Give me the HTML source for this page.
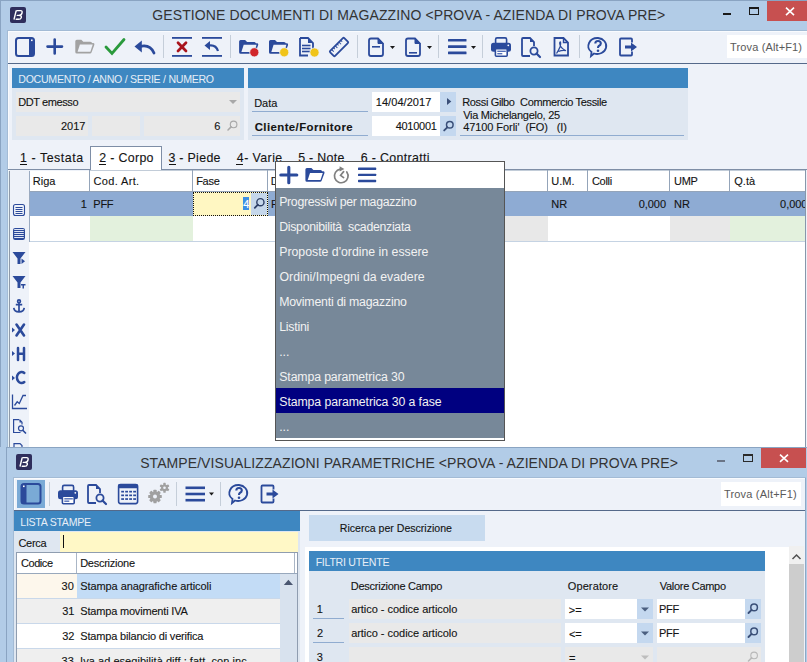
<!DOCTYPE html>
<html><head><meta charset="utf-8"><style>
html,body{margin:0;padding:0;}
body{width:807px;height:662px;position:relative;overflow:hidden;font-family:"Liberation Sans", sans-serif;background:#b2cce7;}
svg{pointer-events:none;}
div{-webkit-text-stroke:0.12px currentColor;}
</style></head><body>
<div style="position:absolute;left:0px;top:0px;width:807px;height:447px;background:#b2cce7;"></div>
<div style="position:absolute;left:0px;top:0px;width:807px;height:1px;background:#8aa4c2;"></div>
<div style="position:absolute;left:0px;top:0px;width:1px;height:447px;background:#8aa4c2;"></div>
<div style="position:absolute;left:10px;top:7px;width:16px;height:16px;background:#2f2e5c;border-radius:2px"></div>
<svg style="position:absolute;left:0;top:0" width="807" height="662" viewBox="0 0 807 662"><g stroke="#fff" stroke-width="1.4" fill="none" stroke-linecap="round" stroke-linejoin="round"><path d="M14.1 19 L16.1 11"/><path d="M16.9 10.6 H20.6 Q22.5 10.6 22.1 12.6 Q21.7 15.2 19 15.4 H17.3 M19 15.4 Q21.8 15.6 21.3 17.6 Q20.8 19.3 18.5 19.3 H16.2"/></g></svg>
<div style="position:absolute;left:152.27px;top:8.45px;font-size:14px;line-height:14px;color:#333333;font-weight:400;letter-spacing:0.102px;white-space:pre;-webkit-text-stroke:0;">GESTIONE DOCUMENTI DI MAGAZZINO &lt;PROVA - AZIENDA DI PROVA PRE&gt;</div>
<div style="position:absolute;left:723px;top:13px;width:8px;height:2px;background:#1a1a1a;"></div>
<div style="position:absolute;left:749px;top:7px;width:10px;height:8px;background:transparent;border:1px solid #1a1a1a;border-top-width:2px;box-sizing:border-box"></div>
<div style="position:absolute;left:767px;top:1px;width:40px;height:20px;background:#c75050;"></div>
<svg style="position:absolute;left:0;top:0" width="807" height="662" viewBox="0 0 807 662"><path d="M786 7.6 L794 15.2 M794 7.6 L786 15.2" stroke="#fff" stroke-width="1.6"/></svg>
<div style="position:absolute;left:7px;top:30px;width:800px;height:417px;background:#a3bbd5;"></div>
<div style="position:absolute;left:8px;top:31px;width:799px;height:416px;background:#f9fbfe;"></div>
<div style="position:absolute;left:9px;top:32px;width:798px;height:415px;background:#eef2f9;"></div>
<div style="position:absolute;left:8px;top:63px;width:799px;height:1px;background:#54698a;"></div>
<div style="position:absolute;left:727px;top:35px;width:80px;height:23px;background:#ffffff;"></div>
<div style="position:absolute;left:730.11px;top:42.09px;font-size:11px;line-height:11px;color:#5a5a5a;font-weight:400;letter-spacing:0.131px;white-space:pre;-webkit-text-stroke:0;">Trova (Alt+F1)</div>
<div style="position:absolute;left:12px;top:68px;width:232px;height:20px;background:#3e87c1;"></div>
<div style="position:absolute;left:12px;top:88px;width:232px;height:52px;background:#dfe7f1;"></div>
<div style="position:absolute;left:18.27px;top:74.03px;font-size:10.6px;line-height:10.6px;color:#e6eef7;font-weight:400;letter-spacing:-0.275px;white-space:pre;-webkit-text-stroke:0;">DOCUMENTO / ANNO / SERIE / NUMERO</div>
<div style="position:absolute;left:16px;top:92px;width:224px;height:20px;background:#e9e9e9;"></div>
<div style="position:absolute;left:18.27px;top:96.99px;font-size:11px;line-height:11px;color:#141414;font-weight:400;letter-spacing:-0.409px;white-space:pre;">DDT emesso</div>
<div style="position:absolute;left:16px;top:116px;width:72px;height:20px;background:#e9e9e9;"></div>
<div style="position:absolute;left:92px;top:116px;width:48px;height:20px;background:#e9e9e9;"></div>
<div style="position:absolute;left:144px;top:116px;width:96px;height:20px;background:#e9e9e9;"></div>
<div style="position:absolute;right:721.59px;top:121.19px;font-size:11px;line-height:11px;color:#141414;font-weight:400;letter-spacing:0.000px;white-space:pre;">2017</div>
<div style="position:absolute;right:586.60px;top:121.19px;font-size:11px;line-height:11px;color:#141414;font-weight:400;letter-spacing:0.000px;white-space:pre;">6</div>
<div style="position:absolute;left:248px;top:68px;width:440px;height:20px;background:#3e87c1;"></div>
<div style="position:absolute;left:248px;top:88px;width:440px;height:52px;background:#dfe7f1;"></div>
<div style="position:absolute;left:252px;top:111px;width:116px;height:1px;background:#90acd0;"></div>
<div style="position:absolute;left:252px;top:135px;width:116px;height:1px;background:#90acd0;"></div>
<div style="position:absolute;left:254.17px;top:98.19px;font-size:11px;line-height:11px;color:#141414;font-weight:400;letter-spacing:0.000px;white-space:pre;">Data</div>
<div style="position:absolute;left:254.67px;top:122.35px;font-size:11.4px;line-height:11.4px;color:#141414;font-weight:700;letter-spacing:0.425px;white-space:pre;">Cliente/Fornitore</div>
<div style="position:absolute;left:372px;top:92px;width:68px;height:20px;background:#ffffff;"></div>
<div style="position:absolute;left:440px;top:92px;width:16px;height:20px;background:#c4d8ef;"></div>
<div style="position:absolute;left:372px;top:116px;width:68px;height:20px;background:#ffffff;"></div>
<div style="position:absolute;left:440px;top:116px;width:16px;height:20px;background:#c4d8ef;"></div>
<div style="position:absolute;left:375.75px;top:96.99px;font-size:11px;line-height:11px;color:#141414;font-weight:400;letter-spacing:0.060px;white-space:pre;">14/04/2017</div>
<div style="position:absolute;right:370.35px;top:120.99px;font-size:11px;line-height:11px;color:#141414;font-weight:400;letter-spacing:-0.258px;white-space:pre;">4010001</div>
<div style="position:absolute;left:462.27px;top:96.79px;font-size:11px;line-height:11px;color:#141414;font-weight:400;letter-spacing:-0.352px;white-space:pre;">Rossi Gilbo  Commercio Tessile</div>
<div style="position:absolute;left:463.14px;top:109.59px;font-size:11px;line-height:11px;color:#141414;font-weight:400;letter-spacing:-0.257px;white-space:pre;">Via Michelangelo, 25</div>
<div style="position:absolute;left:463.13px;top:122.19px;font-size:11px;line-height:11px;color:#141414;font-weight:400;letter-spacing:-0.069px;white-space:pre;">47100 Forli'  (FO)   (I)</div>
<div style="position:absolute;left:460px;top:135px;width:224px;height:1px;background:#90acd0;"></div>
<div style="position:absolute;left:8px;top:169px;width:82px;height:1px;background:#7e8ea6;"></div>
<div style="position:absolute;left:162px;top:169px;width:645px;height:1px;background:#7e8ea6;"></div>
<div style="position:absolute;left:90px;top:170px;width:715px;height:1px;background:#c2ccd8;"></div>
<div style="position:absolute;left:90px;top:146px;width:72px;height:24px;background:#ffffff;border:1px solid #7e8ea6;border-bottom:none;box-sizing:border-box"></div>
<div style="position:absolute;left:20.05px;top:152.30px;font-size:12.4px;line-height:12.4px;color:#141414;font-weight:400;letter-spacing:0.545px;white-space:pre;">1 - Testata</div>
<div style="position:absolute;left:99.24px;top:152.30px;font-size:12.4px;line-height:12.4px;color:#141414;font-weight:400;letter-spacing:0.326px;white-space:pre;">2 - Corpo</div>
<div style="position:absolute;left:168.38px;top:152.30px;font-size:12.4px;line-height:12.4px;color:#141414;font-weight:400;letter-spacing:0.313px;white-space:pre;">3 - Piede</div>
<div style="position:absolute;left:236.83px;top:152.30px;font-size:12.4px;line-height:12.4px;color:#141414;font-weight:400;letter-spacing:0.413px;white-space:pre;">4- Varie</div>
<div style="position:absolute;left:298.16px;top:152.30px;font-size:12.4px;line-height:12.4px;color:#141414;font-weight:400;letter-spacing:0.301px;white-space:pre;">5 - Note</div>
<div style="position:absolute;left:360.64px;top:152.30px;font-size:12.4px;line-height:12.4px;color:#141414;font-weight:400;letter-spacing:0.352px;white-space:pre;">6 - Contratti</div>
<div style="position:absolute;left:20.3px;top:164px;width:7px;height:1px;background:#141414;"></div>
<div style="position:absolute;left:99.3px;top:164px;width:7px;height:1px;background:#141414;"></div>
<div style="position:absolute;left:168.5px;top:164px;width:7px;height:1px;background:#141414;"></div>
<div style="position:absolute;left:236.2px;top:164px;width:7px;height:1px;background:#141414;"></div>
<div style="position:absolute;left:8px;top:171px;width:1px;height:276px;background:#e6f2f8;"></div>
<div style="position:absolute;left:9px;top:171px;width:1px;height:276px;background:#8f9aa8;"></div>
<div style="position:absolute;left:10px;top:171px;width:19px;height:276px;background:#eef2f9;"></div>
<div style="position:absolute;left:29px;top:171px;width:776px;height:276px;background:#ffffff;"></div>
<div style="position:absolute;left:805px;top:170px;width:1px;height:277px;background:#8797ab;"></div>
<div style="position:absolute;left:29px;top:191px;width:776px;height:1px;background:#94a4b9;"></div>
<div style="position:absolute;left:89px;top:170px;width:1px;height:21px;background:#94a4b9;"></div>
<div style="position:absolute;left:192px;top:170px;width:1px;height:21px;background:#94a4b9;"></div>
<div style="position:absolute;left:267px;top:170px;width:1px;height:21px;background:#94a4b9;"></div>
<div style="position:absolute;left:547px;top:170px;width:1px;height:21px;background:#94a4b9;"></div>
<div style="position:absolute;left:587px;top:170px;width:1px;height:21px;background:#94a4b9;"></div>
<div style="position:absolute;left:669px;top:170px;width:1px;height:21px;background:#94a4b9;"></div>
<div style="position:absolute;left:729px;top:170px;width:1px;height:21px;background:#94a4b9;"></div>
<div style="position:absolute;left:32.77px;top:175.59px;font-size:11px;line-height:11px;color:#141414;font-weight:400;letter-spacing:-0.012px;white-space:pre;">Riga</div>
<div style="position:absolute;left:93.57px;top:175.59px;font-size:11px;line-height:11px;color:#141414;font-weight:400;letter-spacing:0.345px;white-space:pre;">Cod. Art.</div>
<div style="position:absolute;left:196.17px;top:175.59px;font-size:11px;line-height:11px;color:#141414;font-weight:400;letter-spacing:-0.257px;white-space:pre;">Fase</div>
<div style="position:absolute;left:270.77px;top:175.59px;font-size:11px;line-height:11px;color:#141414;font-weight:400;letter-spacing:0.000px;white-space:pre;">D</div>
<div style="position:absolute;left:551.30px;top:175.59px;font-size:11px;line-height:11px;color:#141414;font-weight:400;letter-spacing:0.000px;white-space:pre;">U.M.</div>
<div style="position:absolute;left:591.97px;top:175.59px;font-size:11px;line-height:11px;color:#141414;font-weight:400;letter-spacing:-0.300px;white-space:pre;">Colli</div>
<div style="position:absolute;left:674.00px;top:175.59px;font-size:11px;line-height:11px;color:#141414;font-weight:400;letter-spacing:-0.300px;white-space:pre;">UMP</div>
<div style="position:absolute;left:734.32px;top:175.59px;font-size:11px;line-height:11px;color:#141414;font-weight:400;letter-spacing:0.000px;white-space:pre;">Q.tà</div>
<div style="position:absolute;left:29px;top:192px;width:776px;height:24px;background:#8eabd3;"></div>
<div style="position:absolute;right:720.15px;top:198.89px;font-size:11px;line-height:11px;color:#141414;font-weight:400;letter-spacing:0.000px;white-space:pre;">1</div>
<div style="position:absolute;left:93.37px;top:198.89px;font-size:11px;line-height:11px;color:#141414;font-weight:400;letter-spacing:-0.300px;white-space:pre;">PFF</div>
<div style="position:absolute;left:271.07px;top:198.89px;font-size:11px;line-height:11px;color:#141414;font-weight:400;letter-spacing:0.000px;white-space:pre;">P</div>
<div style="position:absolute;left:551.27px;top:198.89px;font-size:11px;line-height:11px;color:#141414;font-weight:400;letter-spacing:0.000px;white-space:pre;">NR</div>
<div style="position:absolute;right:140.97px;top:198.89px;font-size:11px;line-height:11px;color:#141414;font-weight:400;letter-spacing:-0.034px;white-space:pre;">0,000</div>
<div style="position:absolute;left:673.97px;top:198.89px;font-size:11px;line-height:11px;color:#141414;font-weight:400;letter-spacing:0.000px;white-space:pre;">NR</div>
<div style="position:absolute;right:-0.43px;top:198.89px;font-size:11px;line-height:11px;color:#141414;font-weight:400;letter-spacing:-0.034px;white-space:pre;">0,000</div>
<div style="position:absolute;left:805px;top:170px;width:1px;height:47px;background:#8797ab;"></div>
<div style="position:absolute;left:806px;top:170px;width:1px;height:47px;background:#eef2f9;"></div>
<div style="position:absolute;left:193px;top:192px;width:75px;height:24px;background:#fff7c2;"></div>
<div style="position:absolute;left:251px;top:193px;width:16px;height:22px;background:#c5d7eb;"></div>
<div style="position:absolute;left:243px;top:197px;width:6px;height:13px;background:#3c8fe4;"></div>
<div style="position:absolute;right:557.65px;top:199.19px;font-size:11px;line-height:11px;color:#ffffff;font-weight:400;letter-spacing:0.000px;white-space:pre;">4</div>
<div style="position:absolute;left:193px;top:192px;width:75px;height:24px;box-sizing:border-box;border:1px dotted #111"></div>
<div style="position:absolute;left:90px;top:216px;width:103px;height:25px;background:#e3f1dd;"></div>
<div style="position:absolute;left:504px;top:216px;width:44px;height:25px;background:#e8e8e8;"></div>
<div style="position:absolute;left:670px;top:216px;width:60px;height:25px;background:#e8e8e8;"></div>
<div style="position:absolute;left:730px;top:216px;width:75px;height:25px;background:#e3f1dd;"></div>
<div style="position:absolute;left:29px;top:241px;width:776px;height:1px;background:#c5d3e3;"></div>
<div style="position:absolute;left:29px;top:171px;width:1px;height:71px;background:#9aaac0;"></div>
<svg style="position:absolute;left:0;top:0" width="807" height="662" viewBox="0 0 807 662"><rect x="13.5" y="204.5" width="11" height="11" rx="2" fill="none" stroke="#2b4a9b" stroke-width="1.1"/><rect x="15.5" y="207" width="7" height="1" fill="#2b4a9b"/><rect x="15.5" y="209" width="7" height="1" fill="#2b4a9b"/><rect x="15.5" y="211" width="7" height="1" fill="#2b4a9b"/><rect x="15.5" y="213" width="7" height="1" fill="#2b4a9b"/><rect x="13" y="228" width="12" height="12" rx="2.2" fill="#2b4a9b"/><rect x="15" y="229" width="8" height="1" fill="#dfe6f5"/><rect x="14" y="229" width="0.8" height="1" fill="#dfe6f5"/><rect x="23.2" y="229" width="0.8" height="1" fill="#dfe6f5"/><rect x="15" y="231" width="8" height="1" fill="#dfe6f5"/><rect x="14" y="231" width="0.8" height="1" fill="#dfe6f5"/><rect x="23.2" y="231" width="0.8" height="1" fill="#dfe6f5"/><rect x="15" y="233" width="8" height="1" fill="#dfe6f5"/><rect x="14" y="233" width="0.8" height="1" fill="#dfe6f5"/><rect x="23.2" y="233" width="0.8" height="1" fill="#dfe6f5"/><rect x="15" y="235" width="8" height="1" fill="#dfe6f5"/><rect x="14" y="235" width="0.8" height="1" fill="#dfe6f5"/><rect x="23.2" y="235" width="0.8" height="1" fill="#dfe6f5"/><rect x="15" y="237" width="8" height="1" fill="#dfe6f5"/><rect x="14" y="237" width="0.8" height="1" fill="#dfe6f5"/><rect x="23.2" y="237" width="0.8" height="1" fill="#dfe6f5"/><path d="M12.5 252 L25.5 252 L20.5 258.5 L20.5 264 L17.5 264 L17.5 258.5 Z" fill="#2b4a9b"/><path d="M21.5 258.5 L25 261.2 L21.5 264 Z" fill="#2b4a9b"/><path d="M12.5 276 L25.5 276 L20.5 282.5 L20.5 288 L17.5 288 L17.5 282.5 Z" fill="#2b4a9b"/><path d="M21 284 H25.5 V285.5 H24 V288.5 H22.5 V285.5 H21 Z" fill="#2b4a9b"/><g stroke="#2b4a9b" stroke-width="1.7" fill="none"><circle cx="19" cy="301.3" r="1.4"/><path d="M19 302.8 V311.5 M15.8 304.6 H22.2 M13.8 307.8 Q14.2 311.8 19 311.8 Q23.8 311.8 24.2 307.8"/></g><path d="M12 327.5 L15 330 L12 332.5 Z" fill="#2b4a9b"/><path d="M16.5 324.5 L24 335.5 M24 324.5 L16.5 335.5" stroke="#2b4a9b" stroke-width="2.6" stroke-linecap="round"/><path d="M12 351.0 L15 353.5 L12 356.0 Z" fill="#2b4a9b"/><path d="M18 348 V360 M24 348 V360 M18 353.8 H24" stroke="#2b4a9b" stroke-width="2.5" stroke-linecap="round"/><path d="M12 375.5 L15 378 L12 380.5 Z" fill="#2b4a9b"/><path d="M24.3 373 A4.6 5.5 0 1 0 24.3 382" stroke="#2b4a9b" stroke-width="2.5" fill="none" stroke-linecap="round"/><path d="M12.5 394.5 V408.5 H27" stroke="#2b4a9b" stroke-width="1.3" fill="none"/><path d="M14.5 405.5 L17.2 401.8 L19.3 403.5 L23 395.5 L26 395.5" stroke="#2b4a9b" stroke-width="1.3" fill="none"/><path d="M19 419.6 H13.6 V432.5 H20.5 M19.5 419.6 L22 422.2 V424.5" stroke="#2b4a9b" stroke-width="1.2" fill="none"/><path d="M19.5 419.6 V422.5 H22 Z" fill="#2b4a9b"/><circle cx="21" cy="428.3" r="2.5" stroke="#2b4a9b" stroke-width="1.2" fill="none"/><path d="M23 430.5 L25.5 433" stroke="#2b4a9b" stroke-width="1.7" stroke-linecap="round"/><path d="M14 447 V443.6 H20 L22 445.6 V447" stroke="#2b4a9b" stroke-width="1.2" fill="none"/></svg>
<svg style="position:absolute;left:0;top:0" width="807" height="662" viewBox="0 0 807 662"><rect x="16" y="38" width="18" height="18" rx="2.5" fill="none" stroke="#2b4a9b" stroke-width="2"/><rect x="29" y="38" width="5" height="18" fill="#2b4a9b"/><rect x="31" y="39.5" width="1.6" height="1.6" fill="#fff"/><path d="M54.7 39.5 V53.5 M47.5 46.6 H62" stroke="#2b4a9b" stroke-width="2.6" stroke-linecap="round"/><path d="M106 47 L112 53.5 L124 39.5" stroke="#2a9a3c" stroke-width="2.8" fill="none" stroke-linecap="round"/><path d="M140 46.5 Q150 44 154 53" stroke="#2b4a9b" stroke-width="2.8" fill="none" stroke-linecap="round"/><path d="M134.5 46.5 L141.8 40.5 L141.8 52.5 Z" fill="#2b4a9b"/><rect x="163.0" y="35" width="1" height="23" fill="#c5ced9"/><rect x="230.0" y="35" width="1" height="23" fill="#c5ced9"/><rect x="357.0" y="35" width="1" height="23" fill="#c5ced9"/><rect x="438.0" y="35" width="1" height="23" fill="#c5ced9"/><rect x="482.0" y="35" width="1" height="23" fill="#c5ced9"/><rect x="579.0" y="35" width="1" height="23" fill="#c5ced9"/><rect x="172" y="37" width="20" height="1.8" fill="#2b4a9b"/><rect x="172" y="55" width="20" height="1.8" fill="#2b4a9b"/><path d="M178 42.8 L186 51 M186 42.8 L178 51" stroke="#a8141c" stroke-width="2.7" stroke-linecap="round"/><rect x="202" y="37" width="20" height="1.8" fill="#2b4a9b"/><rect x="202" y="55" width="20" height="1.8" fill="#2b4a9b"/><path d="M209 45.5 Q216 44.5 218 51" stroke="#2b4a9b" stroke-width="2.2" fill="none"/><path d="M204.5 45.5 L210 41 L210 50 Z" fill="#2b4a9b"/><path d="M75.3 41.3 Q75.3 39.8 76.8 39.8 H81.3 L83.3 41.8 H90.3 Q91.8 41.8 92.3 43.3 L92.6 43.0 H93.3 Q94.69999999999999 43.0 94.4 44.8 L91.6 52.3 Q91.2 53.5 90.0 53.5 H76.8 Q75.3 53.5 75.3 52.0 Z" fill="#a2a2a2"/><path d="M79.89999999999999 44.599999999999994 H92.69999999999999 L90.39999999999999 51.8 H77.6 Z" fill="#eef2f9"/><path d="M239.1 41.5 Q239.1 40 240.6 40 H245.1 L247.1 42 H254.1 Q255.6 42 256.1 43.5 L256.4 43.2 H257.1 Q258.5 43.2 258.2 45 L255.4 52.5 Q255.0 53.7 253.79999999999998 53.7 H240.6 Q239.1 53.7 239.1 52.2 Z" fill="#2b4a9b"/><path d="M243.7 44.8 H256.5 L254.2 52 H241.4 Z" fill="#eef2f9"/><circle cx="254.29999999999998" cy="52.3" r="4.6" fill="#d1262a" stroke="#eef2f9" stroke-width="0.8"/><path d="M269 41.5 Q269 40 270.5 40 H275 L277 42 H284 Q285.5 42 286 43.5 L286.3 43.2 H287 Q288.4 43.2 288.1 45 L285.3 52.5 Q284.9 53.7 283.7 53.7 H270.5 Q269 53.7 269 52.2 Z" fill="#2b4a9b"/><path d="M273.6 44.8 H286.4 L284.1 52 H271.3 Z" fill="#eef2f9"/><circle cx="284.2" cy="52.3" r="4.6" fill="#f0c41a" stroke="#eef2f9" stroke-width="0.8"/><path d="M300 38 H308 L313 43 V50 M300 38 V55.5 H308" stroke="#2b4a9b" stroke-width="1.8" fill="none"/><path d="M308 38 V43 H313 Z" fill="#2b4a9b"/><rect x="302" y="44.7" width="8.5" height="1.6" fill="#2b4a9b"/><rect x="302" y="47.7" width="8.5" height="1.6" fill="#2b4a9b"/><rect x="302" y="50.7" width="8.5" height="1.6" fill="#2b4a9b"/><circle cx="314.5" cy="52.5" r="4.6" fill="#f0c41a" stroke="#eef2f9" stroke-width="0.8"/><g transform="rotate(-45 339 47)"><rect x="329" y="43.5" width="20" height="7" rx="1" fill="none" stroke="#2b4a9b" stroke-width="1.8"/><rect x="331.5" y="43.5" width="1" height="3" fill="#2b4a9b"/><rect x="334.1" y="43.5" width="1" height="2" fill="#2b4a9b"/><rect x="336.7" y="43.5" width="1" height="3" fill="#2b4a9b"/><rect x="339.3" y="43.5" width="1" height="2" fill="#2b4a9b"/><rect x="341.9" y="43.5" width="1" height="3" fill="#2b4a9b"/><rect x="344.5" y="43.5" width="1" height="2" fill="#2b4a9b"/></g><path d="M371 38.5 H378 L383 43.5 V54.0 Q383 56.0 381 56.0 H371 Q369 56.0 369 54.0 V40.5 Q369 38.5 371 38.5 Z" stroke="#2b4a9b" stroke-width="1.8" fill="none"/><path d="M378 38.5 V43.5 H383 Z" fill="#2b4a9b" stroke="#2b4a9b" stroke-width="1"/><rect x="372" y="46.0" width="8" height="1.6" fill="#2b4a9b"/><path d="M390 46 H395 L392.5 49 Z" fill="#1a1a1a"/><path d="M408 38.5 H415 L420 43.5 V54.0 Q420 56.0 418 56.0 H408 Q406 56.0 406 54.0 V40.5 Q406 38.5 408 38.5 Z" stroke="#2b4a9b" stroke-width="1.8" fill="none"/><path d="M415 38.5 V43.5 H420 Z" fill="#2b4a9b" stroke="#2b4a9b" stroke-width="1"/><rect x="409" y="52.0" width="8" height="1.6" fill="#2b4a9b"/><path d="M427 46 H432 L429.5 49 Z" fill="#1a1a1a"/><rect x="448" y="39.0" width="18.5" height="2.6" rx="0.5" fill="#2b4a9b"/><rect x="448" y="45.3" width="18.5" height="2.6" rx="0.5" fill="#2b4a9b"/><rect x="448" y="51.6" width="18.5" height="2.6" rx="0.5" fill="#2b4a9b"/><path d="M471 46 H476 L473.5 49 Z" fill="#1a1a1a"/><rect x="495.6" y="37.9" width="11" height="6" rx="1.5" fill="none" stroke="#2b4a9b" stroke-width="1.6"/><rect x="491" y="42.8" width="20" height="9" rx="2.5" fill="#2b4a9b"/><rect x="495.4" y="48.6" width="11.8" height="7.6" rx="1" fill="#ffffff" stroke="#2b4a9b" stroke-width="1.6"/><rect x="497.3" y="50.6" width="8.5" height="1.4" fill="#5570b8"/><rect x="497.3" y="53" width="5" height="1.4" fill="#5570b8"/><circle cx="508.3" cy="45.3" r="0.9" fill="#fff"/><path d="M530 56 H523 Q522 56 522 55 V39 Q522 38 523 38 H530 L534 42 V46" stroke="#2b4a9b" stroke-width="1.8" fill="none"/><path d="M530 38 V42 H534 Z" fill="#2b4a9b"/><circle cx="534" cy="51" r="3.6" stroke="#2b4a9b" stroke-width="1.8" fill="none"/><path d="M536.5 53.5 L540 57" stroke="#2b4a9b" stroke-width="2.2" stroke-linecap="round"/><path d="M554.5 38 H563.5 L568 42.5 V55.5 H554.5 Z" stroke="#2b4a9b" stroke-width="1.8" fill="none"/><path d="M563.5 38 V42.5 H568" stroke="#2b4a9b" stroke-width="1.4" fill="none"/><path d="M556.5 53.5 Q558.5 50.5 560 47 Q561 43.5 560.5 42 Q559.5 42 559.8 44 Q560.5 48 565.5 50.5 Q562 50 558.5 51.5" stroke="#2b4a9b" stroke-width="1.3" fill="none" stroke-linejoin="round"/><path d="M598 38 A9.2 8 0 1 1 594 53.5 L591 56 L591.5 52 A9.2 8 0 0 1 598 38 Z" stroke="#2b4a9b" stroke-width="1.8" fill="none"/><path d="M595.3 43.5 Q595.3 41 598 41 Q600.8 41 600.8 43.5 Q600.8 45 598.8 46 Q598 46.5 598 48" stroke="#2b4a9b" stroke-width="2.1" fill="none"/><circle cx="598" cy="50.8" r="1.3" fill="#2b4a9b"/><path d="M632 42.5 V39.5 Q632 38.5 631 38.5 H621 Q620 38.5 620 39.5 V54.5 Q620 55.5 621 55.5 H631 Q632 55.5 632 54.5 V51.5" stroke="#2b4a9b" stroke-width="1.8" fill="none"/><path d="M625 45.5 H631 V42.5 L637 47.0 L631 51.5 V48.5 H625 Z" fill="#2b4a9b"/></svg>
<div style="position:absolute;left:275px;top:161px;width:230px;height:280px;background:#ffffff;border:1px solid #555;box-sizing:border-box"></div>
<div style="position:absolute;left:276px;top:188px;width:228px;height:250px;background:#778899;"></div>
<div style="position:absolute;left:276px;top:388px;width:228px;height:25px;background:#000080;"></div>
<div style="position:absolute;left:279.19px;top:195.69px;font-size:12.3px;line-height:12.3px;color:#f2f2f2;font-weight:400;letter-spacing:-0.308px;white-space:pre;-webkit-text-stroke:0;">Progressivi per magazzino</div>
<div style="position:absolute;left:279.19px;top:220.69px;font-size:12.3px;line-height:12.3px;color:#f2f2f2;font-weight:400;letter-spacing:-0.282px;white-space:pre;-webkit-text-stroke:0;">Disponibilità  scadenziata</div>
<div style="position:absolute;left:279.19px;top:245.69px;font-size:12.3px;line-height:12.3px;color:#f2f2f2;font-weight:400;letter-spacing:-0.002px;white-space:pre;-webkit-text-stroke:0;">Proposte d'ordine in essere</div>
<div style="position:absolute;left:279.47px;top:270.69px;font-size:12.3px;line-height:12.3px;color:#f2f2f2;font-weight:400;letter-spacing:0.011px;white-space:pre;-webkit-text-stroke:0;">Ordini/Impegni da evadere</div>
<div style="position:absolute;left:279.19px;top:295.69px;font-size:12.3px;line-height:12.3px;color:#f2f2f2;font-weight:400;letter-spacing:-0.199px;white-space:pre;-webkit-text-stroke:0;">Movimenti di magazzino</div>
<div style="position:absolute;left:279.19px;top:320.69px;font-size:12.3px;line-height:12.3px;color:#f2f2f2;font-weight:400;letter-spacing:-0.220px;white-space:pre;-webkit-text-stroke:0;">Listini</div>
<div style="position:absolute;left:279.17px;top:345.69px;font-size:12.3px;line-height:12.3px;color:#f2f2f2;font-weight:400;letter-spacing:0.000px;white-space:pre;-webkit-text-stroke:0;">...</div>
<div style="position:absolute;left:279.27px;top:370.69px;font-size:12.3px;line-height:12.3px;color:#f2f2f2;font-weight:400;letter-spacing:-0.129px;white-space:pre;-webkit-text-stroke:0;">Stampa parametrica 30</div>
<div style="position:absolute;left:279.27px;top:395.69px;font-size:12.3px;line-height:12.3px;color:#f2f2f2;font-weight:400;letter-spacing:-0.090px;white-space:pre;-webkit-text-stroke:0;">Stampa parametrica 30 a fase</div>
<div style="position:absolute;left:279.17px;top:420.69px;font-size:12.3px;line-height:12.3px;color:#f2f2f2;font-weight:400;letter-spacing:0.000px;white-space:pre;-webkit-text-stroke:0;">...</div>
<svg style="position:absolute;left:0;top:0" width="807" height="662" viewBox="0 0 807 662"><path d="M288.8 167.3 V182.7 M280.8 175 H296.8" stroke="#2b4a9b" stroke-width="3.1" stroke-linecap="round"/><path d="M305.4 169.6 Q305.4 168.1 306.9 168.1 H311.4 L313.4 170.1 H320.4 Q321.9 170.1 322.4 171.6 L322.7 171.29999999999998 H323.4 Q324.79999999999995 171.29999999999998 324.5 173.1 L321.7 180.6 Q321.29999999999995 181.79999999999998 320.09999999999997 181.79999999999998 H306.9 Q305.4 181.79999999999998 305.4 180.29999999999998 Z" fill="#2b4a9b"/><path d="M310.0 172.9 H322.79999999999995 L320.5 180.1 H307.7 Z" fill="#ffffff"/><g stroke="#808080" stroke-width="1.7" fill="none" stroke-linecap="round"><path d="M346.8 172 A6.8 6.8 0 1 1 340.2 169.2"/><path d="M343.6 171.6 L340.6 175.3 L343.6 177.6"/></g><path d="M339.6 166.2 L344.4 168.9 L339.6 171.6 Z" fill="#808080"/><rect x="358" y="167.6" width="18.2" height="2.4" rx="0.6" fill="#2b4a9b"/><rect x="358" y="173.7" width="18.2" height="2.4" rx="0.6" fill="#2b4a9b"/><rect x="358" y="179.79999999999998" width="18.2" height="2.4" rx="0.6" fill="#2b4a9b"/></svg>
<div style="position:absolute;left:6px;top:447px;width:801px;height:215px;background:#b2cce7;"></div>
<div style="position:absolute;left:6px;top:447px;width:801px;height:1px;background:#8aa4c2;"></div>
<div style="position:absolute;left:6px;top:447px;width:1px;height:215px;background:#8aa4c2;"></div>
<div style="position:absolute;left:16px;top:454px;width:16px;height:16px;background:#2f2e5c;border-radius:2px"></div>
<svg style="position:absolute;left:0;top:0" width="807" height="662" viewBox="0 0 807 662"><g stroke="#fff" stroke-width="1.4" fill="none" stroke-linecap="round" stroke-linejoin="round"><path d="M20.1 466 L22.1 458"/><path d="M22.9 457.6 H26.6 Q28.5 457.6 28.1 459.6 Q27.7 462.2 25 462.4 H23.3 M25 462.4 Q27.8 462.6 27.3 464.6 Q26.8 466.3 24.5 466.3 H22.2"/></g></svg>
<div style="position:absolute;left:140.14px;top:455.95px;font-size:14px;line-height:14px;color:#333333;font-weight:400;letter-spacing:0.079px;white-space:pre;-webkit-text-stroke:0;">STAMPE/VISUALIZZAZIONI PARAMETRICHE &lt;PROVA - AZIENDA DI PROVA PRE&gt;</div>
<div style="position:absolute;left:717px;top:460px;width:8px;height:2px;background:#6a7486;"></div>
<div style="position:absolute;left:743px;top:454px;width:10px;height:8px;background:transparent;border:1px solid #2a2a2a;border-top-width:2px;box-sizing:border-box"></div>
<div style="position:absolute;left:761px;top:448px;width:45px;height:20px;background:#c75050;"></div>
<svg style="position:absolute;left:0;top:0" width="807" height="662" viewBox="0 0 807 662"><path d="M780 454.6 L788 461.9 M788 454.6 L780 461.9" stroke="#fff" stroke-width="1.6"/></svg>
<div style="position:absolute;left:13px;top:477px;width:793px;height:185px;background:#a3bbd5;"></div>
<div style="position:absolute;left:14px;top:478px;width:791px;height:184px;background:#f9fbfe;"></div>
<div style="position:absolute;left:15px;top:479px;width:790px;height:183px;background:#eef2f9;"></div>
<div style="position:absolute;left:14px;top:510px;width:791px;height:1px;background:#54698a;"></div>
<div style="position:absolute;left:805px;top:478px;width:1px;height:184px;background:#8da8c6;"></div>
<div style="position:absolute;left:721px;top:482px;width:80px;height:24px;background:#ffffff;"></div>
<div style="position:absolute;left:723.91px;top:489.09px;font-size:11px;line-height:11px;color:#5a5a5a;font-weight:400;letter-spacing:0.200px;white-space:pre;-webkit-text-stroke:0;">Trova (Alt+F1)</div>
<div style="position:absolute;left:17px;top:480px;width:28px;height:28px;background:#7aaad6;"></div>
<svg style="position:absolute;left:0;top:0" width="807" height="662" viewBox="0 0 807 662"><rect x="21.5" y="484" width="19" height="19.5" rx="2.5" fill="none" stroke="#2b4a9b" stroke-width="2"/><rect x="21.5" y="484" width="5" height="19.5" fill="#2b4a9b"/><rect x="23" y="485.5" width="1.6" height="1.6" fill="#fff"/><rect x="49.0" y="482" width="1" height="24" fill="#c5ced9"/><rect x="176.0" y="482" width="1" height="24" fill="#c5ced9"/><rect x="220.0" y="482" width="1" height="24" fill="#c5ced9"/><rect x="62.6" y="485.4" width="11" height="6" rx="1.5" fill="none" stroke="#2b4a9b" stroke-width="1.6"/><rect x="58" y="490.3" width="20" height="9" rx="2.5" fill="#2b4a9b"/><rect x="62.4" y="496.1" width="11.8" height="7.6" rx="1" fill="#ffffff" stroke="#2b4a9b" stroke-width="1.6"/><rect x="64.3" y="498.1" width="8.5" height="1.4" fill="#5570b8"/><rect x="64.3" y="500.5" width="5" height="1.4" fill="#5570b8"/><circle cx="75.3" cy="492.8" r="0.9" fill="#fff"/><path d="M96 503 H89 Q88 503 88 502 V486 Q88 485 89 485 H96 L100 489 V493" stroke="#2b4a9b" stroke-width="1.8" fill="none"/><path d="M96 485 V489 H100 Z" fill="#2b4a9b"/><circle cx="100" cy="498" r="3.6" stroke="#2b4a9b" stroke-width="1.8" fill="none"/><path d="M102.5 500.5 L106 504" stroke="#2b4a9b" stroke-width="2.2" stroke-linecap="round"/><rect x="118.6" y="484.6" width="19" height="19" rx="2" fill="none" stroke="#2b4a9b" stroke-width="1.6"/><rect x="118" y="484" width="20" height="4.2" rx="1.5" fill="#2b4a9b"/><rect x="121.2" y="490.8" width="2.8" height="1.7" fill="#2b4a9b"/><rect x="121.2" y="494.5" width="2.8" height="1.7" fill="#2b4a9b"/><rect x="121.2" y="498.2" width="2.8" height="1.7" fill="#2b4a9b"/><rect x="125.2" y="490.8" width="2.8" height="1.7" fill="#2b4a9b"/><rect x="125.2" y="494.5" width="2.8" height="1.7" fill="#2b4a9b"/><rect x="125.2" y="498.2" width="2.8" height="1.7" fill="#2b4a9b"/><rect x="129.2" y="490.8" width="2.8" height="1.7" fill="#2b4a9b"/><rect x="129.2" y="494.5" width="2.8" height="1.7" fill="#2b4a9b"/><rect x="129.2" y="498.2" width="2.8" height="1.7" fill="#2b4a9b"/><rect x="133.2" y="490.8" width="2.8" height="1.7" fill="#2b4a9b"/><rect x="133.2" y="494.5" width="2.8" height="1.7" fill="#2b4a9b"/><rect x="133.2" y="498.2" width="2.8" height="1.7" fill="#2b4a9b"/><rect x="153.4" y="489.7" width="3.2" height="3.4" rx="0.6" fill="#a0a0a0" transform="rotate(0.0 155 496.5)"/><rect x="153.4" y="489.7" width="3.2" height="3.4" rx="0.6" fill="#a0a0a0" transform="rotate(45.0 155 496.5)"/><rect x="153.4" y="489.7" width="3.2" height="3.4" rx="0.6" fill="#a0a0a0" transform="rotate(90.0 155 496.5)"/><rect x="153.4" y="489.7" width="3.2" height="3.4" rx="0.6" fill="#a0a0a0" transform="rotate(135.0 155 496.5)"/><rect x="153.4" y="489.7" width="3.2" height="3.4" rx="0.6" fill="#a0a0a0" transform="rotate(180.0 155 496.5)"/><rect x="153.4" y="489.7" width="3.2" height="3.4" rx="0.6" fill="#a0a0a0" transform="rotate(225.0 155 496.5)"/><rect x="153.4" y="489.7" width="3.2" height="3.4" rx="0.6" fill="#a0a0a0" transform="rotate(270.0 155 496.5)"/><rect x="153.4" y="489.7" width="3.2" height="3.4" rx="0.6" fill="#a0a0a0" transform="rotate(315.0 155 496.5)"/><circle cx="155" cy="496.5" r="5.2" fill="#a0a0a0"/><circle cx="155" cy="496.5" r="2.00" fill="#eef2f9"/><rect x="163.3" y="482.8" width="2.4" height="3.4" rx="0.6" fill="#a0a0a0" transform="rotate(0.0 164.5 487.8)"/><rect x="163.3" y="482.8" width="2.4" height="3.4" rx="0.6" fill="#a0a0a0" transform="rotate(60.0 164.5 487.8)"/><rect x="163.3" y="482.8" width="2.4" height="3.4" rx="0.6" fill="#a0a0a0" transform="rotate(120.0 164.5 487.8)"/><rect x="163.3" y="482.8" width="2.4" height="3.4" rx="0.6" fill="#a0a0a0" transform="rotate(180.0 164.5 487.8)"/><rect x="163.3" y="482.8" width="2.4" height="3.4" rx="0.6" fill="#a0a0a0" transform="rotate(240.0 164.5 487.8)"/><rect x="163.3" y="482.8" width="2.4" height="3.4" rx="0.6" fill="#a0a0a0" transform="rotate(300.0 164.5 487.8)"/><circle cx="164.5" cy="487.8" r="3.4" fill="#a0a0a0"/><circle cx="164.5" cy="487.8" r="1.30" fill="#eef2f9"/><rect x="185.5" y="486.5" width="19.5" height="2.6" fill="#2b4a9b"/><rect x="185.5" y="492.7" width="19.5" height="2.6" fill="#2b4a9b"/><rect x="185.5" y="498.9" width="19.5" height="2.6" fill="#2b4a9b"/><path d="M209 492.5 H214 L211.5 495.5 Z" fill="#1a1a1a"/><path d="M239 485 A9.2 8 0 1 1 235 500.5 L232 503 L232.5 499 A9.2 8 0 0 1 239 485 Z" stroke="#2b4a9b" stroke-width="1.8" fill="none"/><path d="M236.3 490.5 Q236.3 488 239 488 Q241.8 488 241.8 490.5 Q241.8 492 239.8 493 Q239 493.5 239 495" stroke="#2b4a9b" stroke-width="2.1" fill="none"/><circle cx="239" cy="497.8" r="1.3" fill="#2b4a9b"/><path d="M273.5 489.5 V486.5 Q273.5 485.5 272.5 485.5 H262.5 Q261.5 485.5 261.5 486.5 V501.5 Q261.5 502.5 262.5 502.5 H272.5 Q273.5 502.5 273.5 501.5 V498.5" stroke="#2b4a9b" stroke-width="1.8" fill="none"/><path d="M266.5 492.5 H272.5 V489.5 L278.5 494.0 L272.5 498.5 V495.5 H266.5 Z" fill="#2b4a9b"/></svg>
<div style="position:absolute;left:14px;top:511px;width:286px;height:151px;background:#dfe7f1;"></div>
<div style="position:absolute;left:14px;top:511px;width:286px;height:20px;background:#3e87c1;"></div>
<div style="position:absolute;left:20.27px;top:517.03px;font-size:10.6px;line-height:10.6px;color:#e6eef7;font-weight:400;letter-spacing:-0.274px;white-space:pre;-webkit-text-stroke:0;">LISTA STAMPE</div>
<div style="position:absolute;left:18.47px;top:538.29px;font-size:11px;line-height:11px;color:#141414;font-weight:400;letter-spacing:-0.300px;white-space:pre;">Cerca</div>
<div style="position:absolute;left:60px;top:532px;width:238px;height:20px;background:#fff8c6;"></div>
<div style="position:absolute;left:63px;top:535px;width:1px;height:13px;background:#111;"></div>
<div style="position:absolute;left:16px;top:552px;width:282px;height:110px;background:#ffffff;border:1px solid #8f9db0;box-sizing:border-box"></div>
<div style="position:absolute;left:17px;top:573px;width:280px;height:1px;background:#98a8bc;"></div>
<div style="position:absolute;left:76px;top:553px;width:1px;height:20px;background:#aab6c6;"></div>
<div style="position:absolute;left:294px;top:553px;width:1px;height:20px;background:#aab6c6;"></div>
<div style="position:absolute;left:20.97px;top:557.59px;font-size:11px;line-height:11px;color:#141414;font-weight:400;letter-spacing:-0.441px;white-space:pre;">Codice</div>
<div style="position:absolute;left:80.17px;top:557.59px;font-size:11px;line-height:11px;color:#141414;font-weight:400;letter-spacing:-0.257px;white-space:pre;">Descrizione</div>
<div style="position:absolute;left:17px;top:574px;width:60px;height:24px;background:#fdf7ec;"></div>
<div style="position:absolute;left:77px;top:574px;width:203px;height:24px;background:#c3dcf6;"></div>
<div style="position:absolute;left:17px;top:598px;width:263px;height:25px;background:#efefef;"></div>
<div style="position:absolute;left:17px;top:648px;width:263px;height:14px;background:#efefef;"></div>
<div style="position:absolute;left:17px;top:598px;width:263px;height:1px;background:#c9d8ea;"></div>
<div style="position:absolute;left:17px;top:623px;width:263px;height:1px;background:#c9d8ea;"></div>
<div style="position:absolute;left:17px;top:648px;width:263px;height:1px;background:#c9d8ea;"></div>
<div style="position:absolute;left:280px;top:574px;width:17px;height:88px;background:#d8e2ee;"></div>
<svg style="position:absolute;left:0;top:0" width="807" height="662" viewBox="0 0 807 662"><path d="M283.8 585 L288.4 579.8 L293 585 Z" fill="#4a5670"/></svg>
<div style="position:absolute;right:733.18px;top:580.59px;font-size:11px;line-height:11px;color:#141414;font-weight:400;letter-spacing:0.000px;white-space:pre;">30</div>
<div style="position:absolute;left:80.26px;top:580.59px;font-size:11px;line-height:11px;color:#141414;font-weight:400;letter-spacing:-0.084px;white-space:pre;">Stampa anagrafiche articoli</div>
<div style="position:absolute;right:732.63px;top:605.59px;font-size:11px;line-height:11px;color:#141414;font-weight:400;letter-spacing:0.000px;white-space:pre;">31</div>
<div style="position:absolute;left:80.26px;top:605.59px;font-size:11px;line-height:11px;color:#141414;font-weight:400;letter-spacing:-0.183px;white-space:pre;">Stampa movimenti IVA</div>
<div style="position:absolute;right:732.62px;top:630.59px;font-size:11px;line-height:11px;color:#141414;font-weight:400;letter-spacing:0.000px;white-space:pre;">32</div>
<div style="position:absolute;left:80.26px;top:630.59px;font-size:11px;line-height:11px;color:#141414;font-weight:400;letter-spacing:-0.178px;white-space:pre;">Stampa bilancio di verifica</div>
<div style="position:absolute;right:733.18px;top:655.59px;font-size:11px;line-height:11px;color:#141414;font-weight:400;letter-spacing:0.000px;white-space:pre;">33</div>
<div style="position:absolute;left:80.09px;top:655.59px;font-size:11px;line-height:11px;color:#141414;font-weight:400;letter-spacing:0.044px;white-space:pre;">Iva ad esegibilità diff.: fatt. con inc.</div>
<div style="position:absolute;left:309px;top:515px;width:176px;height:26px;background:#c8dbef;"></div>
<div style="position:absolute;left:339.87px;top:523.33px;font-size:10.6px;line-height:10.6px;color:#141414;font-weight:400;letter-spacing:-0.018px;white-space:pre;">Ricerca per Descrizione</div>
<div style="position:absolute;left:305px;top:547px;width:484px;height:115px;background:#ffffff;"></div>
<div style="position:absolute;left:309px;top:551px;width:456px;height:20px;background:#3e87c1;"></div>
<div style="position:absolute;left:309px;top:571px;width:456px;height:91px;background:#dfe7f1;"></div>
<div style="position:absolute;left:315.67px;top:557.03px;font-size:10.6px;line-height:10.6px;color:#e6eef7;font-weight:400;letter-spacing:-0.259px;white-space:pre;-webkit-text-stroke:0;">FILTRI UTENTE</div>
<div style="position:absolute;left:350.87px;top:580.69px;font-size:11px;line-height:11px;color:#141414;font-weight:400;letter-spacing:-0.274px;white-space:pre;">Descrizione Campo</div>
<div style="position:absolute;left:567.72px;top:580.69px;font-size:11px;line-height:11px;color:#141414;font-weight:400;letter-spacing:0.119px;white-space:pre;">Operatore</div>
<div style="position:absolute;left:659.84px;top:580.69px;font-size:11px;line-height:11px;color:#141414;font-weight:400;letter-spacing:-0.297px;white-space:pre;">Valore Campo</div>
<div style="position:absolute;left:316.65px;top:604.39px;font-size:11px;line-height:11px;color:#141414;font-weight:400;letter-spacing:0.000px;white-space:pre;">1</div>
<div style="position:absolute;left:313px;top:618px;width:31px;height:1px;background:#90acd0;"></div>
<div style="position:absolute;left:349px;top:599px;width:212px;height:20px;background:#e9e9e9;"></div>
<div style="position:absolute;left:565px;top:599px;width:72px;height:20px;background:#ffffff;"></div>
<div style="position:absolute;left:637px;top:599px;width:16px;height:20px;background:#c4d8ef;"></div>
<div style="position:absolute;left:657px;top:599px;width:88px;height:20px;background:#ffffff;"></div>
<div style="position:absolute;left:745px;top:599px;width:16px;height:20px;background:#c4d8ef;"></div>
<div style="position:absolute;left:351.13px;top:604.19px;font-size:11px;line-height:11px;color:#141414;font-weight:400;letter-spacing:-0.032px;white-space:pre;">artico - codice articolo</div>
<div style="position:absolute;left:568.86px;top:604.69px;font-size:11px;line-height:11px;color:#141414;font-weight:400;letter-spacing:0.000px;white-space:pre;">&gt;=</div>
<div style="position:absolute;left:658.97px;top:604.19px;font-size:11px;line-height:11px;color:#141414;font-weight:400;letter-spacing:-0.300px;white-space:pre;">PFF</div>
<div style="position:absolute;left:316.90px;top:628.39px;font-size:11px;line-height:11px;color:#141414;font-weight:400;letter-spacing:0.000px;white-space:pre;">2</div>
<div style="position:absolute;left:313px;top:642px;width:31px;height:1px;background:#90acd0;"></div>
<div style="position:absolute;left:349px;top:623px;width:212px;height:20px;background:#e9e9e9;"></div>
<div style="position:absolute;left:565px;top:623px;width:72px;height:20px;background:#ffffff;"></div>
<div style="position:absolute;left:637px;top:623px;width:16px;height:20px;background:#c4d8ef;"></div>
<div style="position:absolute;left:657px;top:623px;width:88px;height:20px;background:#ffffff;"></div>
<div style="position:absolute;left:745px;top:623px;width:16px;height:20px;background:#c4d8ef;"></div>
<div style="position:absolute;left:351.13px;top:628.19px;font-size:11px;line-height:11px;color:#141414;font-weight:400;letter-spacing:-0.032px;white-space:pre;">artico - codice articolo</div>
<div style="position:absolute;left:568.92px;top:628.69px;font-size:11px;line-height:11px;color:#141414;font-weight:400;letter-spacing:0.000px;white-space:pre;">&lt;=</div>
<div style="position:absolute;left:658.97px;top:628.19px;font-size:11px;line-height:11px;color:#141414;font-weight:400;letter-spacing:-0.300px;white-space:pre;">PFF</div>
<div style="position:absolute;left:316.84px;top:652.39px;font-size:11px;line-height:11px;color:#141414;font-weight:400;letter-spacing:0.000px;white-space:pre;">3</div>
<div style="position:absolute;left:313px;top:666px;width:31px;height:1px;background:#90acd0;"></div>
<div style="position:absolute;left:349px;top:647px;width:212px;height:20px;background:#e9e9e9;"></div>
<div style="position:absolute;left:565px;top:647px;width:72px;height:20px;background:#e9e9e9;"></div>
<div style="position:absolute;left:637px;top:647px;width:16px;height:20px;background:#e9e9e9;"></div>
<div style="position:absolute;left:657px;top:647px;width:88px;height:20px;background:#e9e9e9;"></div>
<div style="position:absolute;left:745px;top:647px;width:16px;height:20px;background:#e9e9e9;"></div>
<div style="position:absolute;left:568.93px;top:652.69px;font-size:11px;line-height:11px;color:#141414;font-weight:400;letter-spacing:0.000px;white-space:pre;">=</div>
<div style="position:absolute;left:789px;top:546px;width:15px;height:116px;background:#f0f0f0;"></div>
<div style="position:absolute;left:789px;top:564px;width:15px;height:98px;background:#cdcdcd;"></div>
<svg style="position:absolute;left:0;top:0" width="807" height="662" viewBox="0 0 807 662"><path d="M792.5 559 L796.5 555 L800.5 559" stroke="#505050" stroke-width="1.5" fill="none"/></svg>
<svg style="position:absolute;left:0;top:0" width="807" height="662" viewBox="0 0 807 662"><circle cx="233.6" cy="124.4" r="3.3" stroke="#a8a8a8" stroke-width="1.1" fill="none"/><path d="M231.1 126.9 L228.0 130.0" stroke="#a8a8a8" stroke-width="1.5" stroke-linecap="round"/><circle cx="449.8" cy="124.8" r="3.3" stroke="#3a4f78" stroke-width="1.5" fill="none"/><path d="M447.3 127.3 L444.2 130.4" stroke="#3a4f78" stroke-width="1.9" stroke-linecap="round"/><circle cx="260.4" cy="202.2" r="3.6" stroke="#2d3f66" stroke-width="1.4" fill="none"/><path d="M257.9 204.7 L254.79999999999998 207.79999999999998" stroke="#2d3f66" stroke-width="1.7999999999999998" stroke-linecap="round"/><circle cx="754.1" cy="607.4" r="3.3" stroke="#3a4f78" stroke-width="1.5" fill="none"/><path d="M751.6 609.9 L748.5 613.0" stroke="#3a4f78" stroke-width="1.9" stroke-linecap="round"/><path d="M641 607.5 H649 L645 611.5 Z" fill="#4b5f80"/><circle cx="754.1" cy="631.4" r="3.3" stroke="#3a4f78" stroke-width="1.5" fill="none"/><path d="M751.6 633.9 L748.5 637.0" stroke="#3a4f78" stroke-width="1.9" stroke-linecap="round"/><path d="M641 631.5 H649 L645 635.5 Z" fill="#4b5f80"/><circle cx="754.1" cy="655.4" r="3.3" stroke="#b8b8b8" stroke-width="1.1" fill="none"/><path d="M751.6 657.9 L748.5 661.0" stroke="#b8b8b8" stroke-width="1.5" stroke-linecap="round"/><path d="M641 655.5 H649 L645 659.5 Z" fill="#bdbdbd"/><path d="M229 100 H237 L233 104 Z" fill="#a8a8a8"/><path d="M447 98 L451.3 101.5 L447 105 Z" fill="#3a4f78"/></svg>
</body></html>
